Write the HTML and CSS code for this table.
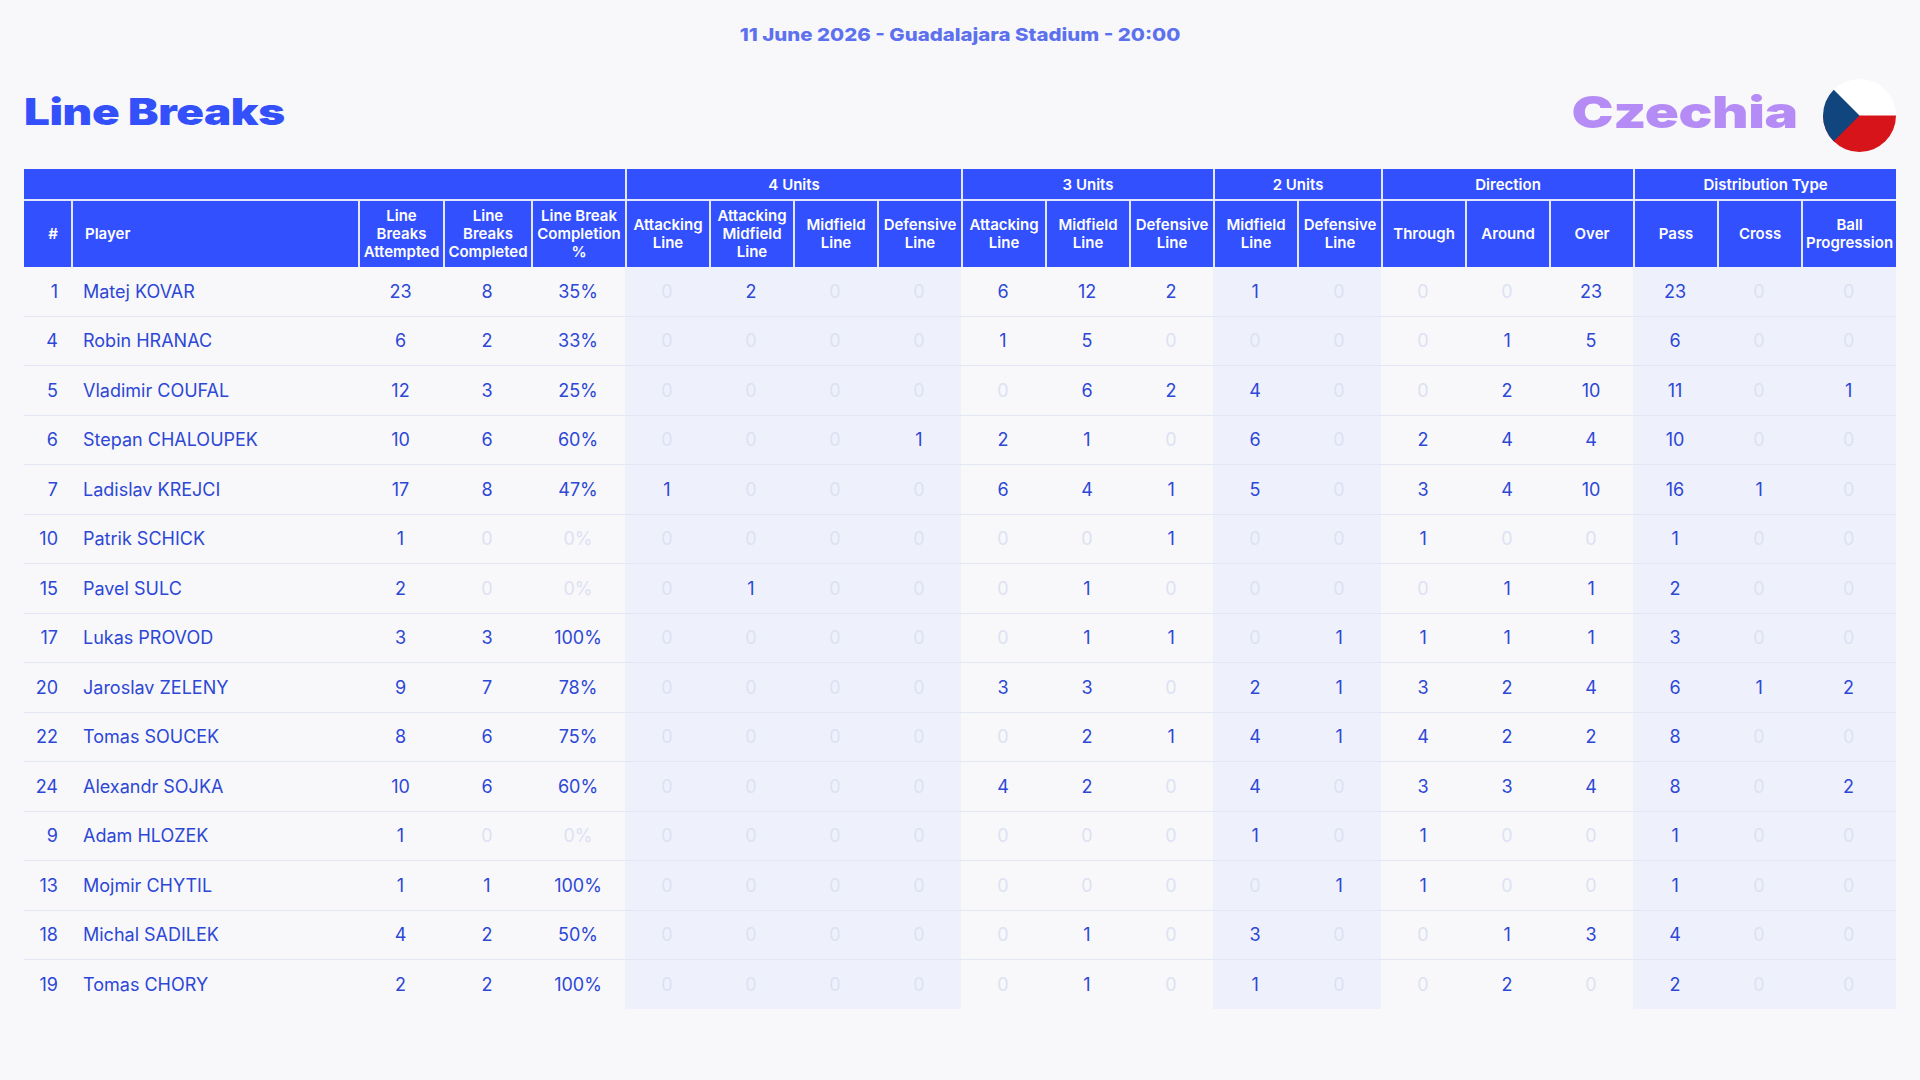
FILE: index.html
```html
<!DOCTYPE html>
<html lang="en">
<head>
<meta charset="utf-8">
<title>Line Breaks - Czechia</title>
<link rel="stylesheet" href="styles.css">
</head>
<body>
<div class="page">
  <div class="date-row"><p class="date">11 June 2026 - Guadalajara Stadium - 20:00</p></div>
  <header class="head">
    <h1 class="title">Line Breaks</h1>
    <div class="team">
      <span class="team-name">Czechia</span>
      <svg class="flag" viewBox="0 0 72 72" aria-label="Czech flag">
        <defs><clipPath id="fc"><circle cx="36" cy="36" r="36"/></clipPath></defs>
        <g clip-path="url(#fc)">
          <rect x="0" y="0" width="72" height="36" fill="#ffffff"/>
          <rect x="0" y="36" width="72" height="36" fill="#d7141a"/>
          <polygon points="0,0 36,36 0,72" fill="#11457e"/>
        </g>
      </svg>
    </div>
  </header>

  <table class="stats">
    <colgroup>
      <col class="c-num"><col class="c-name"><col class="c-a"><col class="c-b"><col class="c-c">
      <col class="c-s sh"><col class="c-s sh"><col class="c-s sh"><col class="c-s sh">
      <col class="c-s"><col class="c-s"><col class="c-s">
      <col class="c-s sh"><col class="c-s sh">
      <col class="c-s"><col class="c-s"><col class="c-s">
      <col class="c-s sh"><col class="c-s sh"><col class="c-l sh">
    </colgroup>
    <thead>
      <tr class="groups">
        <th colspan="5"></th>
        <th colspan="4">4 Units</th>
        <th colspan="3">3 Units</th>
        <th colspan="2">2 Units</th>
        <th colspan="3">Direction</th>
        <th colspan="3">Distribution Type</th>
      </tr>
      <tr class="cols">
        <th class="h-num">#</th>
        <th class="h-name">Player</th>
        <th>Line Breaks Attempted</th>
        <th>Line Breaks Completed</th>
        <th>Line Break Completion %</th>
        <th>Attacking Line</th>
        <th>Attacking Midfield Line</th>
        <th>Midfield Line</th>
        <th>Defensive Line</th>
        <th>Attacking Line</th>
        <th>Midfield Line</th>
        <th>Defensive Line</th>
        <th>Midfield Line</th>
        <th>Defensive Line</th>
        <th>Through</th>
        <th>Around</th>
        <th>Over</th>
        <th>Pass</th>
        <th>Cross</th>
        <th>Ball Progression</th>
      </tr>
    </thead>
    <tbody>
      <tr><td class="num">1</td><td class="name">Matej KOVAR</td><td>23</td><td>8</td><td>35%</td><td class="z">0</td><td>2</td><td class="z">0</td><td class="z">0</td><td>6</td><td>12</td><td>2</td><td>1</td><td class="z">0</td><td class="z">0</td><td class="z">0</td><td>23</td><td>23</td><td class="z">0</td><td class="z">0</td></tr>
      <tr><td class="num">4</td><td class="name">Robin HRANAC</td><td>6</td><td>2</td><td>33%</td><td class="z">0</td><td class="z">0</td><td class="z">0</td><td class="z">0</td><td>1</td><td>5</td><td class="z">0</td><td class="z">0</td><td class="z">0</td><td class="z">0</td><td>1</td><td>5</td><td>6</td><td class="z">0</td><td class="z">0</td></tr>
      <tr><td class="num">5</td><td class="name">Vladimir COUFAL</td><td>12</td><td>3</td><td>25%</td><td class="z">0</td><td class="z">0</td><td class="z">0</td><td class="z">0</td><td class="z">0</td><td>6</td><td>2</td><td>4</td><td class="z">0</td><td class="z">0</td><td>2</td><td>10</td><td>11</td><td class="z">0</td><td>1</td></tr>
      <tr><td class="num">6</td><td class="name">Stepan CHALOUPEK</td><td>10</td><td>6</td><td>60%</td><td class="z">0</td><td class="z">0</td><td class="z">0</td><td>1</td><td>2</td><td>1</td><td class="z">0</td><td>6</td><td class="z">0</td><td>2</td><td>4</td><td>4</td><td>10</td><td class="z">0</td><td class="z">0</td></tr>
      <tr><td class="num">7</td><td class="name">Ladislav KREJCI</td><td>17</td><td>8</td><td>47%</td><td>1</td><td class="z">0</td><td class="z">0</td><td class="z">0</td><td>6</td><td>4</td><td>1</td><td>5</td><td class="z">0</td><td>3</td><td>4</td><td>10</td><td>16</td><td>1</td><td class="z">0</td></tr>
      <tr><td class="num">10</td><td class="name">Patrik SCHICK</td><td>1</td><td class="z">0</td><td class="z">0%</td><td class="z">0</td><td class="z">0</td><td class="z">0</td><td class="z">0</td><td class="z">0</td><td class="z">0</td><td>1</td><td class="z">0</td><td class="z">0</td><td>1</td><td class="z">0</td><td class="z">0</td><td>1</td><td class="z">0</td><td class="z">0</td></tr>
      <tr><td class="num">15</td><td class="name">Pavel SULC</td><td>2</td><td class="z">0</td><td class="z">0%</td><td class="z">0</td><td>1</td><td class="z">0</td><td class="z">0</td><td class="z">0</td><td>1</td><td class="z">0</td><td class="z">0</td><td class="z">0</td><td class="z">0</td><td>1</td><td>1</td><td>2</td><td class="z">0</td><td class="z">0</td></tr>
      <tr><td class="num">17</td><td class="name">Lukas PROVOD</td><td>3</td><td>3</td><td>100%</td><td class="z">0</td><td class="z">0</td><td class="z">0</td><td class="z">0</td><td class="z">0</td><td>1</td><td>1</td><td class="z">0</td><td>1</td><td>1</td><td>1</td><td>1</td><td>3</td><td class="z">0</td><td class="z">0</td></tr>
      <tr><td class="num">20</td><td class="name">Jaroslav ZELENY</td><td>9</td><td>7</td><td>78%</td><td class="z">0</td><td class="z">0</td><td class="z">0</td><td class="z">0</td><td>3</td><td>3</td><td class="z">0</td><td>2</td><td>1</td><td>3</td><td>2</td><td>4</td><td>6</td><td>1</td><td>2</td></tr>
      <tr><td class="num">22</td><td class="name">Tomas SOUCEK</td><td>8</td><td>6</td><td>75%</td><td class="z">0</td><td class="z">0</td><td class="z">0</td><td class="z">0</td><td class="z">0</td><td>2</td><td>1</td><td>4</td><td>1</td><td>4</td><td>2</td><td>2</td><td>8</td><td class="z">0</td><td class="z">0</td></tr>
      <tr><td class="num">24</td><td class="name">Alexandr SOJKA</td><td>10</td><td>6</td><td>60%</td><td class="z">0</td><td class="z">0</td><td class="z">0</td><td class="z">0</td><td>4</td><td>2</td><td class="z">0</td><td>4</td><td class="z">0</td><td>3</td><td>3</td><td>4</td><td>8</td><td class="z">0</td><td>2</td></tr>
      <tr><td class="num">9</td><td class="name">Adam HLOZEK</td><td>1</td><td class="z">0</td><td class="z">0%</td><td class="z">0</td><td class="z">0</td><td class="z">0</td><td class="z">0</td><td class="z">0</td><td class="z">0</td><td class="z">0</td><td>1</td><td class="z">0</td><td>1</td><td class="z">0</td><td class="z">0</td><td>1</td><td class="z">0</td><td class="z">0</td></tr>
      <tr><td class="num">13</td><td class="name">Mojmir CHYTIL</td><td>1</td><td>1</td><td>100%</td><td class="z">0</td><td class="z">0</td><td class="z">0</td><td class="z">0</td><td class="z">0</td><td class="z">0</td><td class="z">0</td><td class="z">0</td><td>1</td><td>1</td><td class="z">0</td><td class="z">0</td><td>1</td><td class="z">0</td><td class="z">0</td></tr>
      <tr><td class="num">18</td><td class="name">Michal SADILEK</td><td>4</td><td>2</td><td>50%</td><td class="z">0</td><td class="z">0</td><td class="z">0</td><td class="z">0</td><td class="z">0</td><td>1</td><td class="z">0</td><td>3</td><td class="z">0</td><td class="z">0</td><td>1</td><td>3</td><td>4</td><td class="z">0</td><td class="z">0</td></tr>
      <tr><td class="num">19</td><td class="name">Tomas CHORY</td><td>2</td><td>2</td><td>100%</td><td class="z">0</td><td class="z">0</td><td class="z">0</td><td class="z">0</td><td class="z">0</td><td>1</td><td class="z">0</td><td>1</td><td class="z">0</td><td class="z">0</td><td>2</td><td class="z">0</td><td>2</td><td class="z">0</td><td class="z">0</td></tr>
    </tbody>
  </table>
</div>
</body>
</html>
```

FILE: styles.css
```css
html, body {
  margin: 0;
  padding: 0;
  background: #f8f8fa;
}

body {
  font-family: Inter, "Noto Sans", "Liberation Sans", sans-serif;
}

.page {
  padding: 0 24px;
}

/* Wide display face emulated by stretching a heavy grotesque */
.date-row {
  display: flex;
  justify-content: center;
  padding-top: 24px;
}

.date {
  margin: 0;
  font-family: Inter, "Noto Sans", sans-serif;
  font-weight: 800;
  font-size: 18px;
  line-height: 22px;
  color: #5d71ef;
  transform: scaleX(1.135);
  transform-origin: center;
}

.head {
  display: flex;
  justify-content: space-between;
  align-items: center;
  height: 73px;
  margin-top: 33px;
}

.title {
  margin: 0 0 8px 0;
  font-family: Inter, "Noto Sans", sans-serif;
  font-weight: 900;
  font-size: 37px;
  line-height: 1;
  letter-spacing: -0.3px;
  color: #3350fa;
  transform: scaleX(1.235);
  transform-origin: left center;
}

.team {
  display: flex;
  align-items: center;
  gap: 25px;
}

.team-name {
  display: inline-block;
  margin-bottom: 7px;
  font-family: Inter, "Noto Sans", sans-serif;
  font-weight: 900;
  font-size: 44px;
  line-height: 1;
  letter-spacing: -0.3px;
  color: #b58bf6;
  transform: scaleX(1.28);
  transform-origin: right center;
}

.flag {
  display: block;
  width: 73px;
  height: 73px;
}

.stats {
  margin-top: 17px;
  width: 1872px;
  table-layout: fixed;
  border-collapse: separate;
  border-spacing: 0;
}

.c-num { width: 47px; }
.c-name { width: 287px; }
.c-a { width: 85px; }
.c-b { width: 88px; }
.c-c { width: 94px; }
.c-s { width: 84px; }
.c-l { width: 95px; }

.sh { background: #eef1fb; }

.stats th {
  background: #3350fe;
  color: #ffffff;
  font-weight: 600;
  font-size: 15px;
  line-height: 18px;
  padding: 0 2px;
  text-align: center;
  vertical-align: middle;
}

.groups th {
  height: 28px;
  padding-top: 2px;
  border-bottom: 2px solid #e4e8ff;
}

.groups th + th,
.cols th + th {
  border-left: 2px solid #e4e8ff;
}

.cols th {
  height: 66px;
}

.cols th.h-num {
  text-align: right;
  padding-right: 13px;
}

.cols th.h-name {
  text-align: left;
  padding-left: 12px;
}

.stats td {
  height: 48.5px;
  padding: 0;
  text-align: center;
  vertical-align: middle;
  font-size: 18px;
  font-weight: 400;
  color: #2d47d6;
}

.stats tbody tr + tr td {
  border-top: 1px solid #e3e6f4;
}

.stats td.num {
  text-align: right;
  padding-right: 13px;
}

.stats td.name {
  text-align: left;
  padding-left: 12px;
}

.stats td.z {
  color: #dde1f3;
}
```
